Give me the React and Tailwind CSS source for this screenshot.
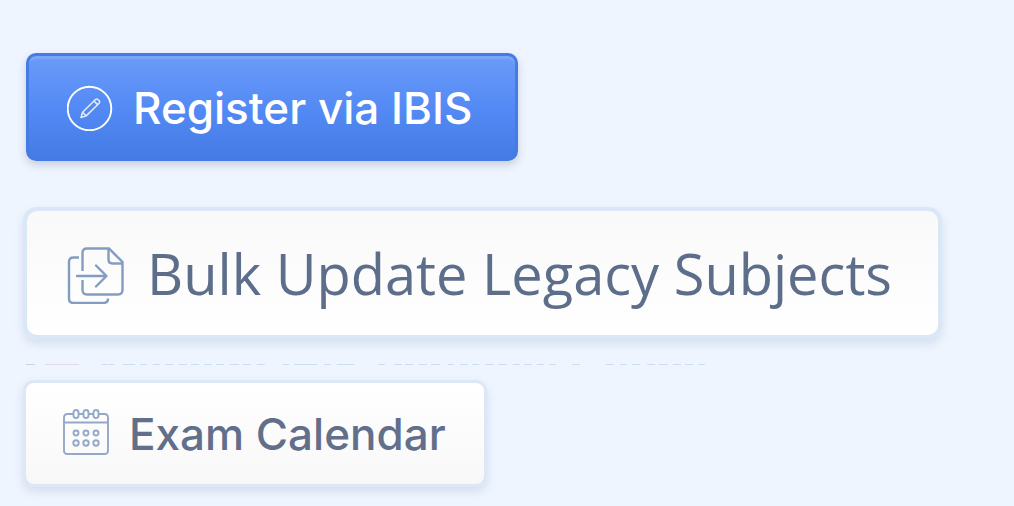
import React from "react";
import clsx from "clsx";

// [start, length] of each dash in the divider
const dashes = [
  [102, 5], [108, 6], [123, 12], [140, 7], [153, 7], [165, 8], [179, 8], [191, 8],
  [204, 8], [216, 8], [230, 9], [243, 8], [257, 8], [283, 6], [294, 23], [324, 7],
  [337, 17], [378, 7], [394, 8], [405, 8], [419, 8], [431, 9], [448, 6], [460, 8],
  [472, 7], [485, 9], [498, 9], [513, 7], [524, 8], [537, 7], [549, 7], [572, 8],
  [606, 8], [620, 7], [632, 8], [647, 8], [659, 9], [673, 8], [685, 8], [698, 7],
];

function PencilCircleIcon() {
  return (
    <svg viewBox="0 0 46 46" className="size-[46px] shrink-0" fill="none" stroke="currentColor" aria-hidden="true">
      <circle cx="22.5" cy="23.5" r="21.8" strokeWidth="1.9" />
      <g strokeWidth="1.5" strokeLinejoin="round" opacity="0.85">
        <path d="M14 32.500l1.600-5.200L28.500 14.500q1.200-1.200 2.600.2l.9.9q1.300 1.400.1 2.600L19.200 30.900z" />
        <path d="M27 16l3.600 3.600M15.600 27.300l3.600 3.600" />
      </g>
    </svg>
  );
}

function CopyArrowIcon() {
  return (
    <svg viewBox="0 -4 58 62" className="h-[62px] w-[58px] shrink-0" fill="none" stroke="currentColor" strokeWidth="2.4" aria-hidden="true">
      <path d="M15.500 25V7q0-4.500 4.500-4.500H42L55.500 16v28q0 4.500-4.500 4.500H20q-4.500 0-4.500-4.500V34" />
      <path d="M41.500 3v10.500q0 4 4 4H55" />
      <path d="M12 11.500H6.500Q2 11.500 2 16v36.500Q2 57 6.500 57H36.500q4.500 0 4.500-4.500" />
      <path d="M10 30h29M29 19.500L39.500 30 29 40.500" strokeLinecap="round" strokeLinejoin="round" />
    </svg>
  );
}

function CalendarIcon() {
  return (
    <svg viewBox="0 0 46 50" className="h-[50px] w-[46px] shrink-0" fill="none" stroke="currentColor" strokeWidth="1.9" aria-hidden="true">
      <path d="M10 5H4.500Q1 5 1 8.500v33Q1 45 4.500 45h37q3.500 0 3.500-3.500v-33Q45 5 41.500 5H36M15.500 5h5M25.500 5h5M1 13.500h44" />
      {[13, 23, 33].map((x) => (
        <g key={x}>
          <rect x={x - 2.5} y="1" width="5" height="8" rx="2.5" />
          <circle cx={x} cy="24" r="2.500" />
          <circle cx={x} cy="34" r="2.700" />
        </g>
      ))}
    </svg>
  );
}

function ActionButton({ icon, className, children }) {
  return (
    <button type="button" className={clsx("flex items-center whitespace-nowrap cursor-pointer", className)}>
      {icon}
      <span>{children}</span>
    </button>
  );
}

export default function App() {
  return (
    <main className="flex min-h-screen flex-col items-start bg-[#eef5ff] px-[23px] pt-[53px] pb-5">
      <ActionButton
        icon={<PencilCircleIcon />}
        className="ml-[3px] h-[108px] gap-5 rounded-[10px] border-[3px] border-[#447be4] bg-linear-to-b from-[#6b9bf8] via-[#548af5] to-[#447be4] pt-[2px] pr-[43px] pl-[38px] font-['Inter',sans-serif] text-[44px] font-medium text-white shadow-[inset_0_3px_0_#7ba5f9,0_4px_8px_rgba(60,70,95,0.22)]"
      >
        Register via IBIS
      </ActionButton>

      <ActionButton
        icon={
          <span className="text-[#839dc1]">
            <CopyArrowIcon />
          </span>
        }
        className="mt-[46px] h-[132px] gap-[22px] rounded-[14px] border-4 border-[#dae7f7] bg-linear-to-b from-[#f9f9f9] to-white bg-clip-padding pr-[46px] pl-10 font-['Open_Sans',sans-serif] text-[56px] text-[#5d6e8b] shadow-[0_5px_10px_rgba(70,90,130,0.14)]"
      >
        Bulk Update Legacy Subjects
      </ActionButton>

      <svg viewBox="0 0 682 1" className="mt-[25px] ml-[3px] h-px w-[682px] shrink-0" aria-hidden="true">
        <rect x="0" width="9" height="1" fill="#d5cbe4" />
        <rect x="19" width="34" height="1" fill="#dfdaed" />
        {dashes.map(([x, width]) => (
          <rect key={x} x={x - 26} width={width} height="1" fill="#ccdcf3" />
        ))}
      </svg>

      <ActionButton
        icon={
          <span className="text-[#94a8c8]">
            <CalendarIcon />
          </span>
        }
        className="mt-[15px] h-[107px] gap-5 rounded-[11px] border-[3px] border-[#dce8f5] bg-linear-to-b from-white to-[#f8f8f8] bg-clip-padding pr-[38px] pl-[37px] font-['Inter',sans-serif] text-[44px] font-medium text-[#626f8b] shadow-[0_4px_10px_rgba(70,80,120,0.15)]"
      >
        Exam Calendar
      </ActionButton>
    </main>
  );
}
